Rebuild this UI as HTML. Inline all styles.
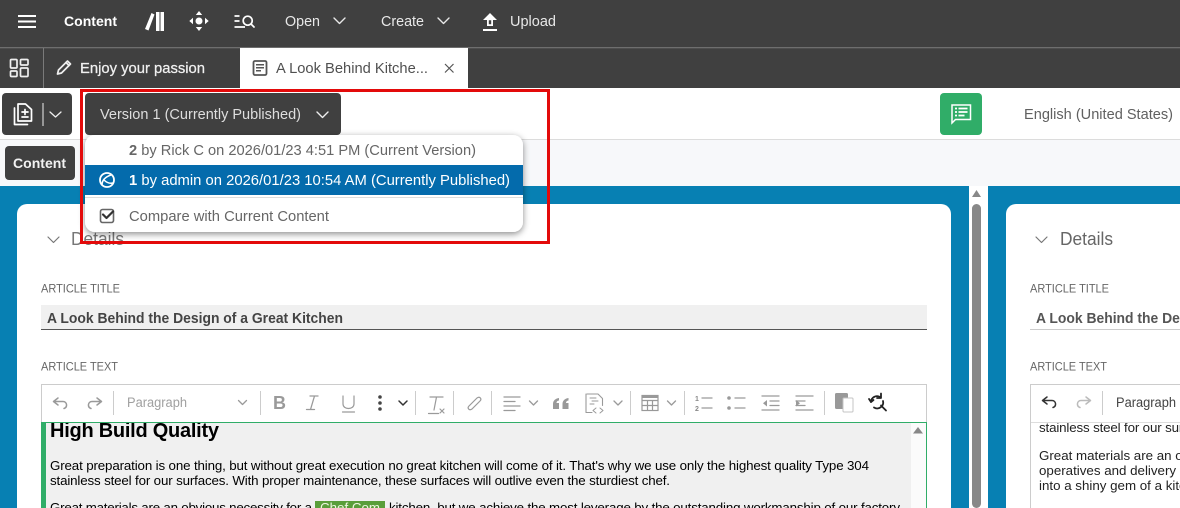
<!DOCTYPE html>
<html><head><meta charset="utf-8"><title>Content</title>
<style>
html,body{margin:0;padding:0;background:#fff;width:1180px;height:508px;overflow:hidden}
svg{display:block;font-family:"Liberation Sans",sans-serif}
.i{fill:none;stroke-linecap:round;stroke-linejoin:round}
</style></head><body>
<svg width="1180" height="508" viewBox="0 0 1180 508" xmlns="http://www.w3.org/2000/svg">
<defs>
<filter id="sh" x="-5%" y="-10%" width="110%" height="130%"><feDropShadow dx="0" dy="2" stdDeviation="3.5" flood-color="#000" flood-opacity=".45"/></filter>
<clipPath id="edL"><rect x="46" y="423" width="865" height="85"/></clipPath>
<clipPath id="edR"><rect x="1031" y="423" width="149" height="85"/></clipPath>
</defs>
<!-- bars -->
<rect width="1180" height="88" fill="#404040"/>
<rect y="47" width="1180" height="1.300" fill="#6e6e6e"/>
<rect y="88" width="1180" height="51" fill="#fff"/>
<rect y="139" width="1180" height="1" fill="#dcdcdc"/>
<rect y="140" width="1180" height="46" fill="#f7f8fa"/>
<rect y="186" width="1180" height="322" fill="#0780b3"/>
<rect x="969" y="186" width="19" height="322" fill="#fff"/>
<rect x="972" y="204" width="9" height="304" rx="4.500" fill="#888"/>
<path d="M972 197l4.500-7 4.500 7z" fill="#888"/>
<rect x="17" y="204" width="934" height="320" rx="10" fill="#fff"/>
<rect x="1006" y="204" width="200" height="320" rx="10" fill="#fff"/>

<!-- top bar -->
<g stroke="#fff" stroke-width="2" fill="none"><path d="M18 16h18M18 21.500h18M18 27h18"/></g>
<text x="64" y="26" fill="#fff" font-size="14" font-weight="700" textLength="53" lengthAdjust="spacingAndGlyphs">Content</text>
<g fill="#fff"><path d="M145 29l6.500-16 3 1.500-6 16z"/><rect x="156" y="12" width="3.500" height="19"/><rect x="160.500" y="12" width="3.500" height="19"/></g>
<g fill="#fff"><circle cx="199" cy="21" r="3.500"/><path d="M195.800 15l3.200-4 3.200 4zM195.800 27l3.200 4 3.200-4zM193 17.800l-3.700 3.200 3.700 3.200zM205 17.800l3.700 3.200-3.700 3.200z"/></g>
<g class="i" stroke="#fff" stroke-width="1.700"><path d="M234.500 16h5M234.500 21h5M234.500 27h10.500" stroke-linecap="butt"/><circle cx="247.700" cy="20.700" r="4.500"/><path d="M251 24l3 3"/></g>
<text x="285" y="26" fill="#e8e8e8" font-size="15" textLength="35" lengthAdjust="spacingAndGlyphs">Open</text>
<path class="i" stroke="#e8e8e8" stroke-width="1.400" d="M334 18l5.500 5.500 5.500-5.500"/>
<text x="381" y="26" fill="#e8e8e8" font-size="15" textLength="43" lengthAdjust="spacingAndGlyphs">Create</text>
<path class="i" stroke="#e8e8e8" stroke-width="1.400" d="M438 18l5.500 5.500 5.500-5.500"/>
<path fill="#fff" fill-rule="evenodd" d="M490 13l7 7h-4v6h-6v-6h-4zM488.800 20.200v4h2.400v-4zM483 29h14v2h-14z"/>
<text x="510" y="26" fill="#e8e8e8" font-size="15" textLength="46" lengthAdjust="spacingAndGlyphs">Upload</text>

<!-- tabs -->
<rect x="43" y="48" width="1" height="40" fill="#7a7a7a"/>
<g fill="none" stroke="#eee" stroke-width="1.700"><rect x="10.500" y="59.500" width="6.500" height="8.500" rx="1"/><rect x="20.500" y="59.500" width="7.500" height="5.500" rx="1"/><rect x="10.500" y="71" width="6.500" height="5.500" rx="1"/><rect x="20.500" y="68" width="7.500" height="8.500" rx="1"/></g>
<g class="i" stroke="#eee" stroke-width="1.700"><path d="M57.500 74l1-4 9-9 3 3-9 9z"/><path d="M66 62.500l3 3"/></g>
<text x="80" y="73" fill="#f0f0f0" font-size="14.500" stroke="#f0f0f0" stroke-width=".25" textLength="125" lengthAdjust="spacingAndGlyphs">Enjoy your passion</text>
<rect x="240" y="48" width="228" height="40" fill="#fff"/>
<rect x="253.500" y="61" width="13" height="14" rx="1.500" fill="none" stroke="#555" stroke-width="1.800"/>
<path stroke="#555" stroke-width="1.500" d="M256 64.800h8M256 67.800h8M256 70.800h5"/>
<text x="276" y="73" fill="#505050" font-size="14.500" textLength="152" lengthAdjust="spacingAndGlyphs">A Look Behind Kitche...</text>
<path stroke="#555" stroke-width="1.200" d="M445 64l8.500 8.500M453.500 64L445 72.500"/>

<!-- action row -->
<rect x="2" y="93" width="70" height="42" rx="4" fill="#404040"/>
<g class="i" stroke="#fff" stroke-width="1.700"><path d="M18 104h7.500l6 5.500V121H18z"/><path d="M14.500 108v16.500h13"/><path d="M22 112h6M25 109.500v5M22 117h6"/></g>
<rect x="42.500" y="103" width="1" height="23" fill="#eee"/>
<path class="i" stroke="#eee" stroke-width="1.300" d="M50 112l5.500 5 5.500-5"/>
<rect x="85" y="93" width="256" height="42" rx="4" fill="#404040"/>
<text x="100" y="119" fill="#dedede" font-size="15" textLength="201" lengthAdjust="spacingAndGlyphs">Version 1 (Currently Published)</text>
<path class="i" stroke="#eee" stroke-width="1.400" d="M317 112l5.500 5.500 5.500-5.500"/>
<rect x="940" y="93" width="42" height="42" rx="4" fill="#30ad68"/>
<path d="M952 105h18.500v14.500h-15l-3.500 3.500z" fill="none" stroke="#fff" stroke-width="1.500"/>
<path stroke="#fff" stroke-width="1.700" d="M955 108.500h2M958.500 108.500h9M955 112h2M958.500 112h9M955 115.500h2M958.500 115.500h6"/>
<text x="1024" y="119" fill="#606060" font-size="14.500" textLength="149" lengthAdjust="spacingAndGlyphs">English (United States)</text>

<rect x="5" y="146" width="70" height="34" rx="4" fill="#404040"/>
<text x="13" y="168" fill="#f2f2f2" font-size="14" font-weight="700" textLength="53" lengthAdjust="spacingAndGlyphs">Content</text>

<!-- left panel -->
<path class="i" stroke="#777" stroke-width="1.200" d="M48 237l5.500 5.500 5.500-5.500"/>
<text x="71" y="245" fill="#777" font-size="18" textLength="53" lengthAdjust="spacingAndGlyphs">Details</text>
<text x="41" y="292.500" fill="#666" font-size="12" textLength="79" lengthAdjust="spacingAndGlyphs">ARTICLE TITLE</text>
<rect x="41" y="305" width="886" height="24" fill="#f0f0f0"/>
<rect x="41" y="329" width="886" height="1" fill="#555"/>
<text x="47" y="323" fill="#444" font-size="14.500" font-weight="700" textLength="296" lengthAdjust="spacingAndGlyphs">A Look Behind the Design of a Great Kitchen</text>
<text x="41" y="370.500" fill="#666" font-size="12" textLength="77" lengthAdjust="spacingAndGlyphs">ARTICLE TEXT</text>

<!-- left editor -->
<rect x="41.500" y="384.500" width="885" height="140" fill="#fff" stroke="#ccc"/>
<g fill="#ccc"><rect x="113" y="391" width="1" height="24"/><rect x="260" y="391" width="1" height="24"/><rect x="415" y="391" width="1" height="24"/><rect x="453" y="391" width="1" height="24"/><rect x="491" y="391" width="1" height="24"/><rect x="630" y="391" width="1" height="24"/><rect x="684" y="391" width="1" height="24"/><rect x="824" y="391" width="1" height="24"/></g>
<g class="i" stroke="#9a9a9a" stroke-width="1.500">
<path d="M58 398l-4.500 3.500 4.500 3.500M54 401.500h9c4 0 5 5.500 1 7"/>
<path d="M97 398l4.500 3.500-4.500 3.500M101 401.500h-9c-4 0-5 5.500-1 7"/>
<path d="M238.500 400.500l4 4 4-4" stroke-width="1.300"/>
<path d="M529.500 401l4 4 4-4M614 401l4 4 4-4M667.500 401l4 4 4-4" stroke-width="1.300"/>
<path d="M343 396v8c0 6 11 6 11 0v-8M342.500 412h12" stroke-width="1.200"/>
<path d="M430 397h13M436.500 397l-2.500 13M428.500 413.500h10M440 409l4 4M444 409l-4 4" stroke-width="1.200"/>
<path d="M471 404l6-6c3-2 5 1 3 3l-8 8c-3 2-5-1-3-3l6-6" stroke-width="1.200"/>
<path d="M504 397h16M504 401.500h11M504 406h16M504 410.500h11" stroke-width="1.300"/>
<path d="M587 394h11l4.500 4.500v7M586 394v18.500h6" stroke-width="1.100"/>
<path d="M590 398h6M592 401h6M590 404h4M596 408l-3 2.500 3 2.500M600 408l3 2.500-3 2.500" stroke-width="1"/>
<path d="M702 398h10M702 408h10M735 398h10M735 408h10" stroke-width="1.300"/>
<path d="M762 396h17M770 401h9M770 405.500h9M762 410h17M796 396h17M796 401h9M796 405.500h9M796 410h17" stroke-width="1.300"/>
</g>
<text x="127" y="407" fill="#a0a0a0" font-size="13.500" textLength="60" lengthAdjust="spacingAndGlyphs">Paragraph</text>
<text x="273" y="409" fill="#9a9a9a" font-size="18" font-weight="700">B</text>
<path class="i" stroke="#9a9a9a" stroke-width="1.300" d="M310 396h8M306.500 409.500h8M314.500 396l-4 13.500"/>
<g fill="#444"><circle cx="380" cy="397" r="1.800"/><circle cx="380" cy="403" r="1.800"/><circle cx="380" cy="409" r="1.800"/></g>
<path class="i" stroke="#333" stroke-width="1.500" d="M399 401l4 4 4-4"/>
<path fill="#999" d="M553 409v-5c0-3.500 2.500-5.500 6-6v2.500c-1.500.3-2.500 1-2.500 2.500h2.500v6zM562.500 409v-5c0-3.500 2.500-5.500 6-6v2.500c-1.500.3-2.500 1-2.500 2.500h2.500v6z"/>
<g fill="none" stroke="#999" stroke-width="1.200"><rect x="642" y="395.500" width="16" height="15"/><path d="M642 400.500h16M642 405.500h16M647.500 400v10.500M652.500 400v10.500"/></g>
<g fill="#999"><rect x="642" y="395" width="16" height="3"/><rect x="835" y="393" width="13" height="16" rx="1.500"/><circle cx="729" cy="398" r="1.800"/><circle cx="729" cy="408" r="1.800"/><path d="M767 400v6.500l-4-3.250zM796 400v6.500l4-3.250z"/></g>
<rect x="843" y="398" width="10" height="14" rx="1" fill="#fff" stroke="#c4c4c4"/>
<text x="695" y="401" fill="#888" font-size="7" font-weight="700">1</text><text x="695" y="411" fill="#888" font-size="7" font-weight="700">2</text>
<g class="i" stroke="#222" stroke-width="1.800"><path d="M871 402a6 6 0 0 1 9-5M883 401a6 6 0 0 1-9 6.500"/><path d="M881 393.500v4.500h-4M881 405.500l5 5M869 399l2 3 2.500-2"/></g>
<rect x="41" y="422" width="886" height="1.200" fill="#30ad68"/>
<rect x="41" y="423" width="5" height="85" fill="#30ad68"/>
<rect x="926" y="423" width="1" height="85" fill="#30ad68"/>
<rect x="46" y="423" width="865" height="85" fill="#f0f0f0"/>
<rect x="911" y="423" width="15" height="85" fill="#fbfbfb"/>
<path d="M913 433.500l5-6.500 5 6.500z" fill="#888"/>
<g clip-path="url(#edL)" fill="#000">
<text x="50" y="437" font-size="20" font-weight="700" textLength="169">High Build Quality</text>
<text x="50" y="470" font-size="13.330" textLength="819">Great preparation is one thing, but without great execution no great kitchen will come of it. That's why we use only the highest quality Type 304</text>
<text x="50" y="485" font-size="13.330" textLength="620">stainless steel for our surfaces. With proper maintenance, these surfaces will outlive even the sturdiest chef.</text>
<text x="50" y="512" font-size="13.330" textLength="262">Great materials are an obvious necessity for a</text>
<rect x="315" y="501" width="70" height="12" fill="#5a9e3a"/>
<text x="320" y="512" font-size="13.330" fill="#eef7e0">Chef Com...</text>
<text x="389" y="512" font-size="13.330" textLength="511">kitchen, but we achieve the most leverage by the outstanding workmanship of our factory</text>
</g>

<!-- right panel -->
<path class="i" stroke="#777" stroke-width="1.200" d="M1036 237l5.500 5.500 5.500-5.500"/>
<text x="1060" y="245" fill="#666" font-size="18" textLength="53" lengthAdjust="spacingAndGlyphs">Details</text>
<text x="1030" y="292.500" fill="#666" font-size="12" textLength="79" lengthAdjust="spacingAndGlyphs">ARTICLE TITLE</text>
<rect x="1030" y="329" width="150" height="1" fill="#ccc"/>
<text x="1036" y="323" fill="#555" font-size="14.500" font-weight="700" textLength="296" lengthAdjust="spacingAndGlyphs">A Look Behind the Design of a Great Kitchen</text>
<text x="1030" y="370.500" fill="#666" font-size="12" textLength="77" lengthAdjust="spacingAndGlyphs">ARTICLE TEXT</text>
<rect x="1030.500" y="384.500" width="180" height="140" fill="#fff" stroke="#ccc"/>
<rect x="1102" y="391" width="1" height="24" fill="#ccc"/>
<rect x="1031" y="422" width="149" height="1" fill="#ddd"/>
<g class="i" stroke-width="1.500">
<path stroke="#333" d="M1047 397l-4.500 3.500 4.500 3.500M1043 400.500h9c4 0 5 5.500 1 7"/>
<path stroke="#bbb" d="M1086 397l4.500 3.500-4.500 3.500M1090 400.500h-9c-4 0-5 5.500-1 7"/>
</g>
<text x="1116" y="407" fill="#444" font-size="13.500" textLength="60" lengthAdjust="spacingAndGlyphs">Paragraph</text>
<g clip-path="url(#edR)" fill="#222">
<text x="1039" y="432" font-size="13.330" textLength="620">stainless steel for our surfaces. With proper maintenance, these surfaces will outlive even the sturdiest chef.</text>
<text x="1039" y="460" font-size="13.330">Great materials are an obvious necessity</text>
<text x="1039" y="475" font-size="13.330">operatives and delivery men who take</text>
<text x="1039" y="490" font-size="13.330">into a shiny gem of a kitchen.</text>
</g>

<!-- dropdown -->
<rect x="85" y="135" width="438" height="97" rx="10" fill="#fff" filter="url(#sh)"/>
<text x="129" y="155" fill="#666" font-size="14.500" textLength="347" lengthAdjust="spacingAndGlyphs"><tspan font-weight="700">2</tspan> by Rick C on 2026/01/23 4:51 PM (Current Version)</text>
<rect x="85" y="165" width="438" height="30" fill="#046bac"/>
<circle cx="107" cy="180" r="7" fill="none" stroke="#fff" stroke-width="1.800"/>
<path class="i" stroke="#fff" stroke-width="1.500" d="M102 185c0-5 3-8 9-10M104 180c2 2 5 4 9 3"/>
<text x="129" y="185" fill="#fff" font-size="14.500" textLength="381" lengthAdjust="spacingAndGlyphs"><tspan font-weight="700">1</tspan> by admin on 2026/01/23 10:54 AM (Currently Published)</text>
<rect x="85" y="197" width="438" height="1" fill="#ddd"/>
<rect x="100.500" y="209.500" width="13" height="13" rx="2" fill="none" stroke="#666" stroke-width="1.600"/>
<path class="i" stroke="#333" stroke-width="2.200" d="M103 214.500l3.500 3.500 6.500-6.500"/>
<text x="129" y="221" fill="#666" font-size="14.500" textLength="200" lengthAdjust="spacingAndGlyphs">Compare with Current Content</text>

<!-- red highlight -->
<rect x="81.500" y="90.500" width="467" height="152" fill="none" stroke="#e30a0a" stroke-width="3"/>
</svg>
</body></html>
